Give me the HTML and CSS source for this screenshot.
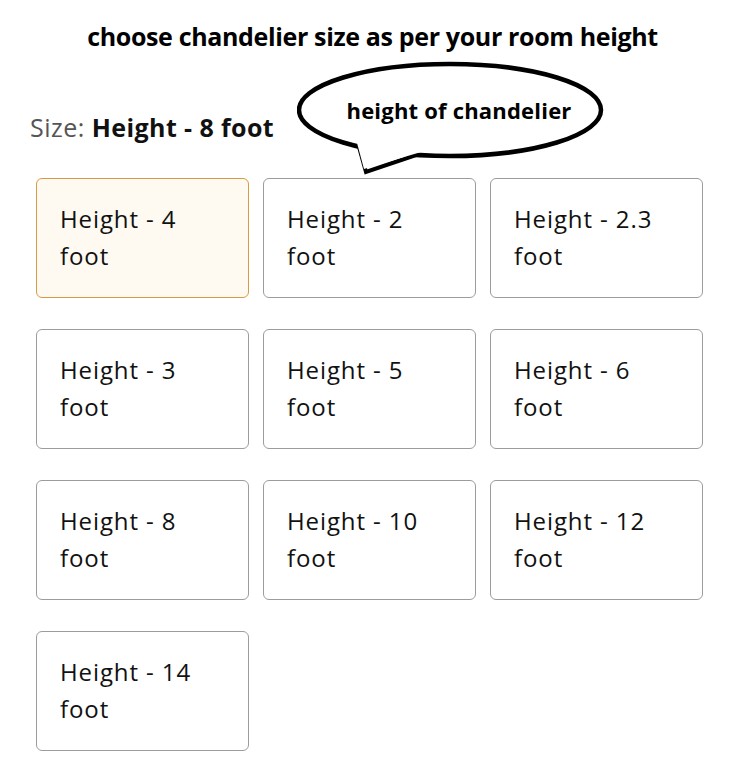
FILE: index.html
```html
<!DOCTYPE html>
<html lang="en">
<head>
    <meta charset="UTF-8">
    <meta name="viewport" content="width=device-width, initial-scale=1.0">
    <title>Chandelier size</title>
    <link rel="stylesheet" href="styles.css">
</head>
<body>
    <div class="page">
        <h1 class="title">choose chandelier size as per your room height</h1>
        <div class="size-head">
            <div class="size-label">Size: <b>Height - 8 foot</b></div>
            <svg class="bubble" width="320" height="120" viewBox="0 0 320 120">
                <path d="M62 86 L69 111 L122 93" fill="#fff" stroke="#000" stroke-width="4" stroke-linejoin="miter"/>
                <ellipse cx="153" cy="49" rx="151" ry="46" fill="#fff" stroke="#000" stroke-width="4.5"/>
                <path d="M60 82 L67 108 L124 91" fill="#fff" stroke="none"/>
                <text x="162" y="58" text-anchor="middle" class="bubble-text">height of chandelier</text>
            </svg>
        </div>
        <div class="sizes">
            <div class="size selected">Height - 4<br>foot</div>
            <div class="size">Height - 2<br>foot</div>
            <div class="size">Height - 2.3<br>foot</div>
            <div class="size">Height - 3<br>foot</div>
            <div class="size">Height - 5<br>foot</div>
            <div class="size">Height - 6<br>foot</div>
            <div class="size">Height - 8<br>foot</div>
            <div class="size">Height - 10<br>foot</div>
            <div class="size">Height - 12<br>foot</div>
            <div class="size">Height - 14<br>foot</div>
        </div>
    </div>
</body>
</html>
```

FILE: styles.css
```css
body {
    margin: 0;
    background: #fff;
    font-family: 'Open Sans', 'Noto Sans', sans-serif;
    color: #111;
}
.page {
    width: 745px;
    padding-top: 19px;
}
.title {
    margin: 0;
    text-align: center;
    font-size: 25px;
    line-height: 34px;
    font-weight: 700;
    letter-spacing: -0.35px;
    color: #000;
}
.size-head {
    position: relative;
    height: 125px;
}
.size-label {
    position: absolute;
    left: 30px;
    top: 57px;
    font-size: 25px;
    line-height: 34px;
    color: #555;
    letter-spacing: 0.5px;
}
.size-label b {
    color: #111;
    letter-spacing: 0.4px;
}
.bubble {
    position: absolute;
    left: 297px;
    top: 8px;
}
.bubble-text {
    font-family: 'Open Sans', 'Noto Sans', sans-serif;
    font-size: 22px;
    font-weight: 700;
    letter-spacing: 0.2px;
    fill: #000;
}
.sizes {
    display: grid;
    grid-template-columns: repeat(3, 213px);
    column-gap: 14px;
    row-gap: 31px;
    padding-left: 36px;
}
.size {
    box-sizing: border-box;
    height: 120px;
    border: 1px solid #9c9c9c;
    border-radius: 6px;
    padding: 21px 0 0 23px;
    font-size: 24px;
    line-height: 37px;
    letter-spacing: 0.9px;
    color: #111;
}
.size.selected {
    border-color: #d99a45;
    background: #fef9f1;
}
```
